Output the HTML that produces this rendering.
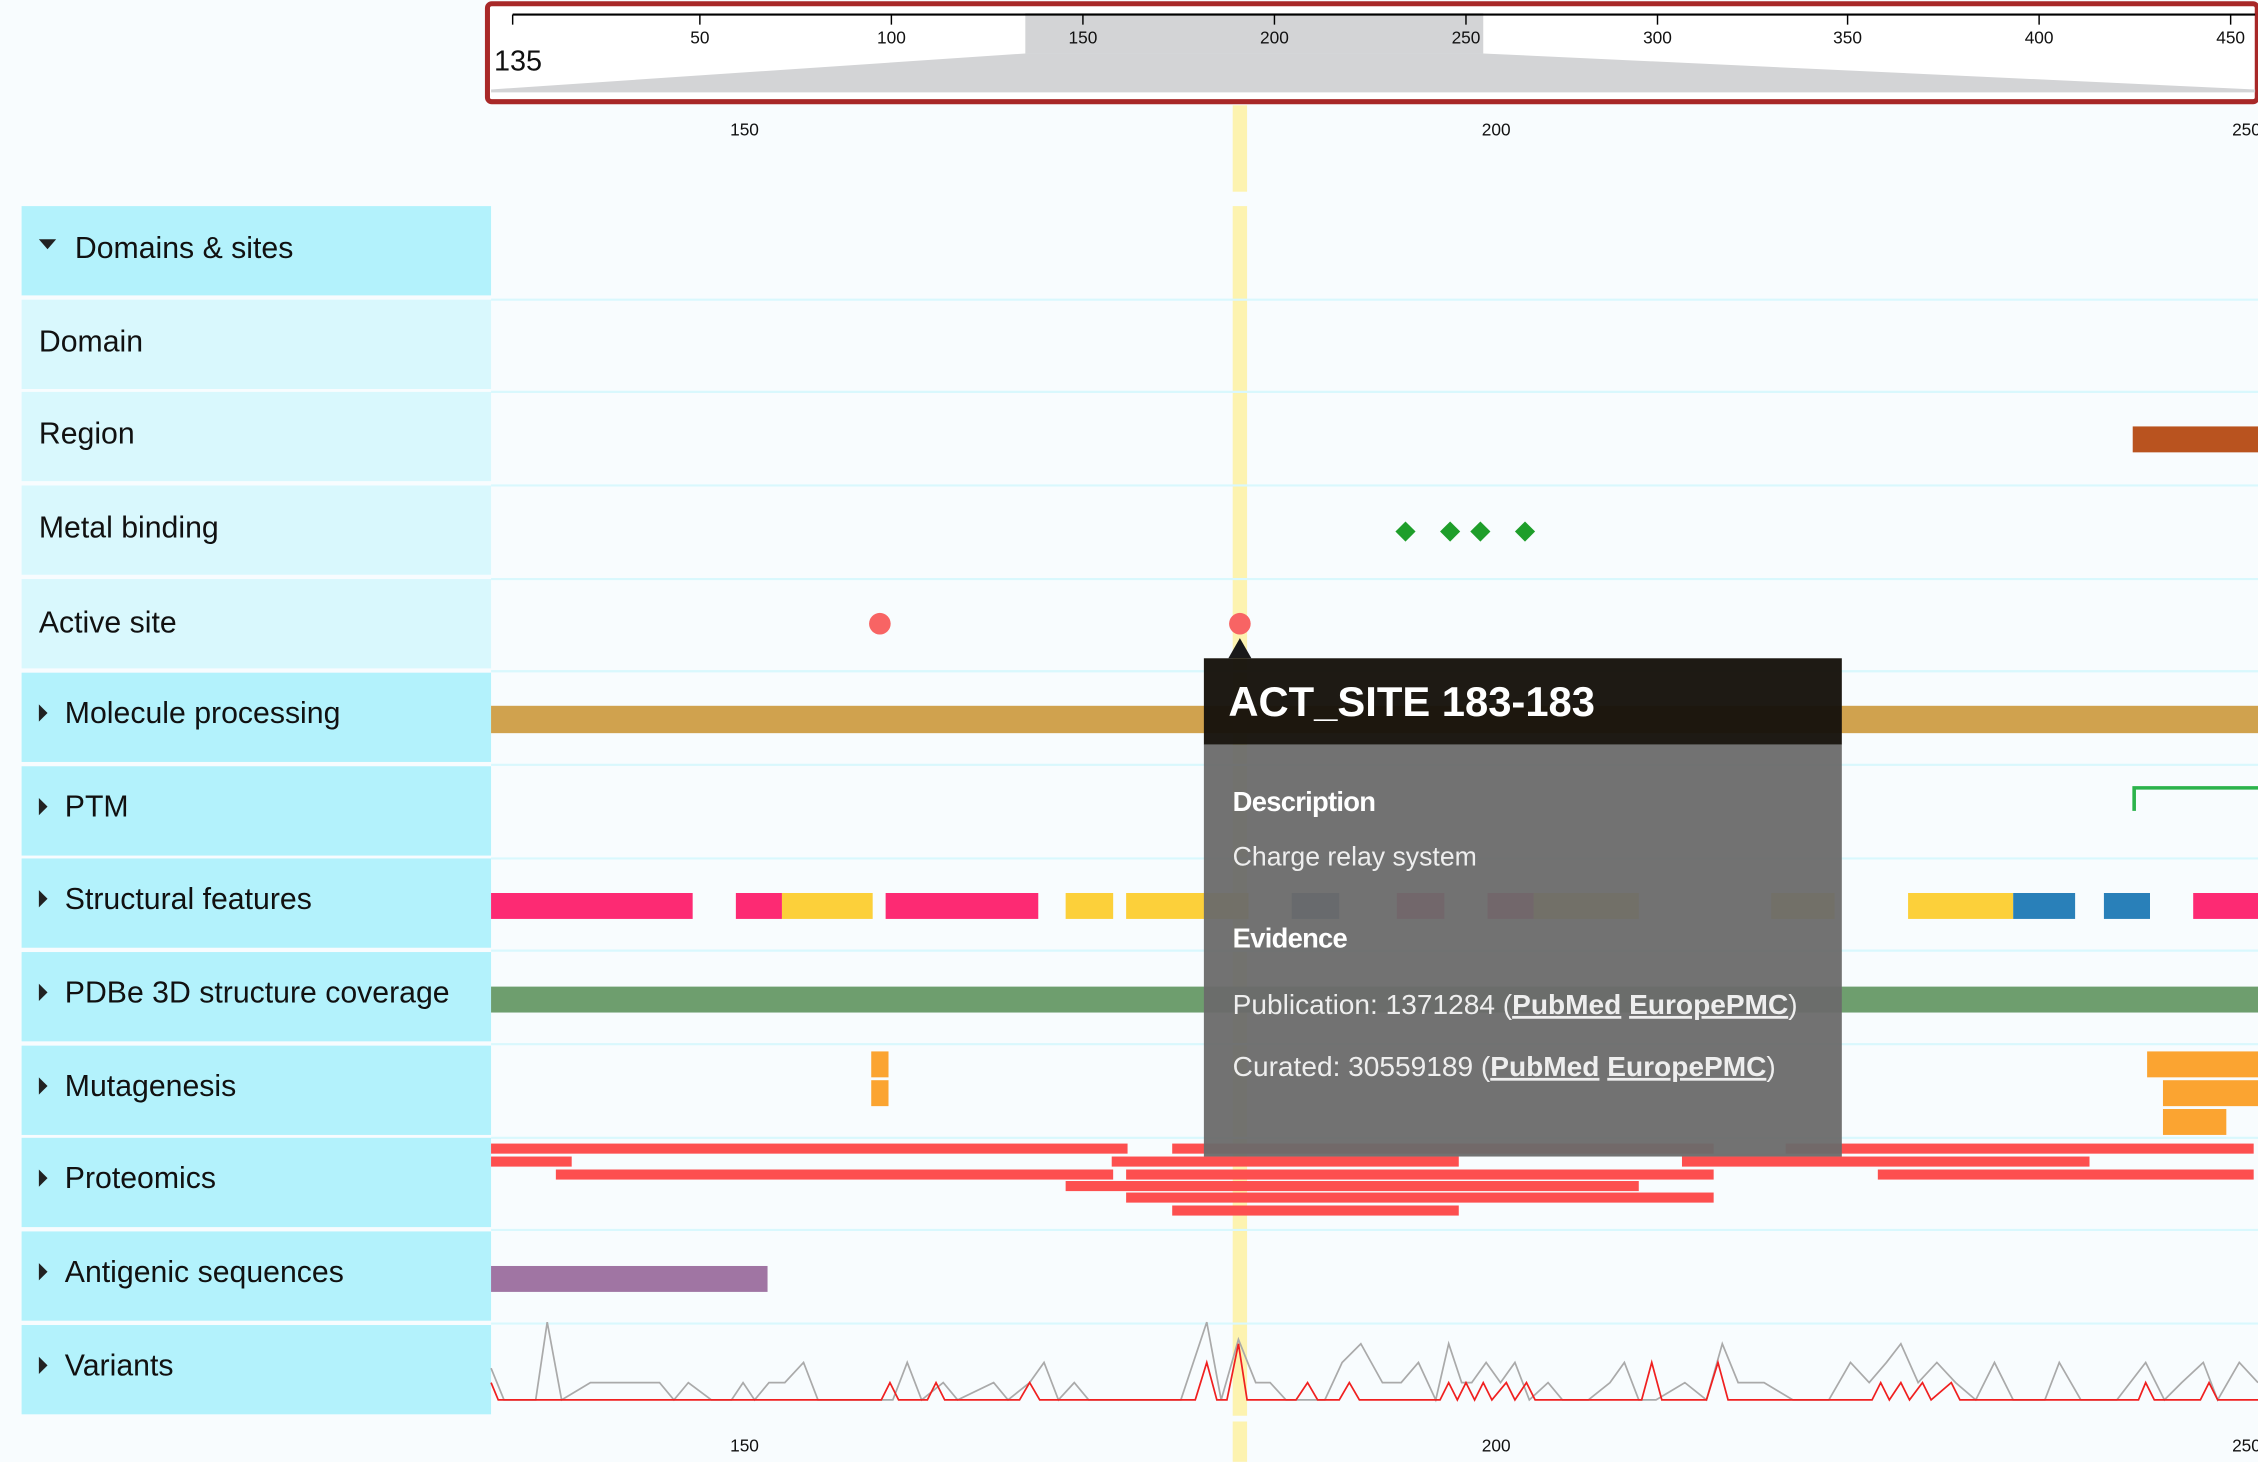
<!DOCTYPE html>
<html><head><meta charset="utf-8"><style>
html,body{margin:0;padding:0;background:#f8fcfe;overflow:hidden}
svg{display:block}
text{font-family:"Liberation Sans",sans-serif}
</style></head><body>
<svg width="2258" height="1462" viewBox="0 0 1568 1015" xmlns="http://www.w3.org/2000/svg">
<rect width="1568" height="1015" fill="#f8fcfe"/>
<rect x="338.5" y="2.5" width="1229" height="68" rx="3" fill="#fff" stroke="#a82828" stroke-width="3.5"/>
<polygon points="712,37 1030,37 1566,62 1566,64 341,64 341,62" fill="#d3d4d6"/>
<rect x="712" y="9" width="318" height="28" fill="#d3d4d6"/>
<line x1="356" y1="10" x2="1566" y2="10" stroke="#000" stroke-width="1.5"/>
<g stroke="#000" stroke-width="1">
<line x1="356" y1="10" x2="356" y2="17"/><line x1="486" y1="10" x2="486" y2="17"/><line x1="619" y1="10" x2="619" y2="17"/><line x1="752" y1="10" x2="752" y2="17"/><line x1="885" y1="10" x2="885" y2="17"/><line x1="1018" y1="10" x2="1018" y2="17"/><line x1="1151" y1="10" x2="1151" y2="17"/><line x1="1283" y1="10" x2="1283" y2="17"/><line x1="1416" y1="10" x2="1416" y2="17"/><line x1="1549" y1="10" x2="1549" y2="17"/>
</g>
<g font-size="12" fill="#111" text-anchor="middle">
<text x="486" y="30">50</text><text x="619" y="30">100</text><text x="752" y="30">150</text><text x="885" y="30">200</text><text x="1018" y="30">250</text><text x="1151" y="30">300</text><text x="1283" y="30">350</text><text x="1416" y="30">400</text><text x="1549" y="30">450</text>
</g>
<text x="343" y="49" font-size="20" fill="#111">135</text>
<g font-size="12" fill="#111" text-anchor="middle">
<text x="517" y="94">150</text><text x="1039" y="94">200</text><text x="1560" y="94">250</text>
<text x="517" y="1008">150</text><text x="1039" y="1008">200</text><text x="1560" y="1008">250</text>
</g>
<rect x="856" y="73" width="10" height="60" fill="#fdf3b0"/>
<rect x="856" y="143" width="10" height="840" fill="#fdf3b0"/>
<rect x="856" y="987" width="10" height="28" fill="#fdf3b0"/>
<g>
<rect x="15" y="143" width="326" height="62" fill="#b3f2fc"/>
<rect x="15" y="208" width="326" height="62" fill="#d9f8fd"/>
<rect x="15" y="272" width="326" height="62" fill="#d9f8fd"/>
<rect x="15" y="337" width="326" height="62" fill="#d9f8fd"/>
<rect x="15" y="402" width="326" height="62" fill="#d9f8fd"/>
<rect x="15" y="467" width="326" height="62" fill="#b3f2fc"/>
<rect x="15" y="532" width="326" height="62" fill="#b3f2fc"/>
<rect x="15" y="596" width="326" height="62" fill="#b3f2fc"/>
<rect x="15" y="661" width="326" height="62" fill="#b3f2fc"/>
<rect x="15" y="726" width="326" height="62" fill="#b3f2fc"/>
<rect x="15" y="790" width="326" height="62" fill="#b3f2fc"/>
<rect x="15" y="855" width="326" height="62" fill="#b3f2fc"/>
<rect x="15" y="920" width="326" height="62" fill="#b3f2fc"/>
</g>
<g stroke="#d9f8fd" stroke-width="1.5">
<line x1="341" y1="208" x2="1568" y2="208"/><line x1="341" y1="272" x2="1568" y2="272"/><line x1="341" y1="337" x2="1568" y2="337"/><line x1="341" y1="402" x2="1568" y2="402"/><line x1="341" y1="466" x2="1568" y2="466"/><line x1="341" y1="531" x2="1568" y2="531"/><line x1="341" y1="596" x2="1568" y2="596"/><line x1="341" y1="660" x2="1568" y2="660"/><line x1="341" y1="725" x2="1568" y2="725"/><line x1="341" y1="790" x2="1568" y2="790"/><line x1="341" y1="854" x2="1568" y2="854"/><line x1="341" y1="919" x2="1568" y2="919"/>
</g>
<g font-size="21" fill="#111">
<polygon points="27,166 39,166 33,173" fill="#222"/>
<text x="52" y="179">Domains &amp; sites</text>
<text x="27" y="244">Domain</text>
<text x="27" y="308">Region</text>
<text x="27" y="373">Metal binding</text>
<text x="27" y="439">Active site</text>
<g fill="#222"><polygon points="27,489 27,501 33,495"/><polygon points="27,554 27,566 33,560"/><polygon points="27,618 27,630 33,624"/><polygon points="27,683 27,695 33,689"/><polygon points="27,748 27,760 33,754"/><polygon points="27,812 27,824 33,818"/><polygon points="27,877 27,889 33,883"/><polygon points="27,942 27,954 33,948"/></g>
<text x="45" y="502">Molecule processing</text>
<text x="45" y="567">PTM</text>
<text x="45" y="631">Structural features</text>
<text x="45" y="696">PDBe 3D structure coverage</text>
<text x="45" y="761">Mutagenesis</text>
<text x="45" y="825">Proteomics</text>
<text x="45" y="890">Antigenic sequences</text>
<text x="45" y="955">Variants</text>
</g>
<rect x="1481" y="296" width="87" height="18" fill="#b9531f"/>
<g fill="#1e9e2a">
<polygon points="976,362 983,369 976,376 969,369"/><polygon points="1007,362 1014,369 1007,376 1000,369"/><polygon points="1028,362 1035,369 1028,376 1021,369"/><polygon points="1059,362 1066,369 1059,376 1052,369"/>
</g>
<circle cx="611" cy="433" r="7.5" fill="#f86464"/>
<circle cx="861" cy="433" r="7.5" fill="#f86464"/>
<rect x="341" y="490" width="1227" height="19" fill="#d0a24e"/>
<path d="M1482,563 V547 H1568" fill="none" stroke="#2bb34b" stroke-width="2.5"/>
<g>
<rect x="341" y="620" width="140" height="18" fill="#fd2a73"/>
<rect x="511" y="620" width="32" height="18" fill="#fd2a73"/>
<rect x="543" y="620" width="63" height="18" fill="#fcd03a"/>
<rect x="615" y="620" width="106" height="18" fill="#fd2a73"/>
<rect x="740" y="620" width="33" height="18" fill="#fcd03a"/>
<rect x="782" y="620" width="85" height="18" fill="#fcd03a"/>
<rect x="897" y="620" width="33" height="18" fill="#3c6d9c"/>
<rect x="970" y="620" width="33" height="18" fill="#fd2a73"/>
<rect x="1033" y="620" width="32" height="18" fill="#fd2a73"/>
<rect x="1065" y="620" width="73" height="18" fill="#fcd03a"/>
<rect x="1230" y="620" width="44" height="18" fill="#fcd03a"/>
<rect x="1325" y="620" width="73" height="18" fill="#fcd03a"/>
<rect x="1398" y="620" width="43" height="18" fill="#2980b9"/>
<rect x="1461" y="620" width="32" height="18" fill="#2980b9"/>
<rect x="1523" y="620" width="45" height="18" fill="#fd2a73"/>
</g>
<rect x="341" y="685" width="1227" height="18" fill="#6e9e6e"/>
<g fill="#fba431">
<rect x="605" y="730" width="12" height="18"/><rect x="605" y="750" width="12" height="18"/>
<rect x="1491" y="730" width="77" height="18"/><rect x="1502" y="750" width="66" height="18"/><rect x="1502" y="770" width="44" height="18"/>
</g>
<g fill="#fd4f4f">
<rect x="341" y="794" width="442" height="7"/><rect x="814" y="794" width="376" height="7"/><rect x="1240" y="794" width="325" height="7"/>
<rect x="341" y="803" width="56" height="7"/><rect x="772" y="803" width="241" height="7"/><rect x="1168" y="803" width="283" height="7"/>
<rect x="386" y="812" width="387" height="7"/><rect x="782" y="812" width="408" height="7"/><rect x="1304" y="812" width="261" height="7"/>
<rect x="740" y="820" width="398" height="7"/>
<rect x="782" y="828" width="408" height="7"/>
<rect x="814" y="837" width="199" height="7"/>
</g>
<rect x="341" y="879" width="192" height="18" fill="#a075a3"/>
<polyline fill="none" stroke="#aaa" stroke-width="1.2" points="341,950 350,972 372,972 380,918 390,972 410,960 458,960 468,972 478,960 494,972 508,972 516,960 524,972 534,960 545,960 558,946 568,972 620,972 630,946 640,972 655,960 665,972 690,960 700,972 715,960 725,946 735,972 746,960 756,972 805,972 820,972 838,918 848,972 860,930 872,960 882,960 893,972 903,972 920,972 932,946 945,933 960,960 973,960 985,946 997,972 1006,933 1015,960 1022,960 1032,946 1042,960 1052,946 1062,972 1075,960 1085,972 1103,972 1118,960 1128,946 1138,972 1150,972 1170,960 1185,972 1196,933 1207,960 1225,960 1245,972 1255,972 1270,972 1285,946 1298,960 1310,946 1320,933 1332,960 1345,946 1358,960 1372,972 1385,946 1398,972 1420,972 1430,946 1445,972 1470,972 1490,946 1503,972 1515,960 1530,946 1540,972 1555,946 1568,960"/>
<polyline fill="none" stroke="#f02020" stroke-width="1.2" points="341,960 346,972 612,972 618,960 624,972 644,972 650,960 656,972 708,972 715,960 722,972 830,972 838,946 845,972 852,972 860,933 866,972 900,972 908,960 915,972 930,972 937,960 944,972 1000,972 1006,960 1012,972 1018,960 1024,972 1030,960 1036,972 1046,960 1052,972 1060,960 1066,972 1140,972 1147,946 1154,972 1185,972 1193,946 1200,972 1300,972 1306,960 1312,972 1320,960 1326,972 1335,960 1341,972 1355,960 1361,972 1485,972 1490,960 1496,972 1528,972 1534,960 1540,972 1568,972"/>
<polygon points="853,457 861,443 869,457" fill="#1a1a1a"/>
<rect x="836" y="457" width="443" height="60" fill="#17130c" fill-opacity="0.97"/>
<rect x="836" y="517" width="443" height="286" fill="#6a6a6a" fill-opacity="0.95"/>
<text x="853" y="497" font-size="29" font-weight="bold" fill="#fff">ACT_SITE 183-183</text>
<g fill="#fff">
<text x="856" y="563" font-size="19" font-weight="bold" letter-spacing="-0.5">Description</text>
<text x="856" y="601" font-size="18.5" fill="#eee">Charge relay system</text>
<text x="856" y="658" font-size="19" font-weight="bold" letter-spacing="-0.5">Evidence</text>
<text x="856" y="704" font-size="19.5" fill="#eee">Publication: 1371284 (<tspan font-weight="bold" text-decoration="underline">PubMed</tspan> <tspan font-weight="bold" text-decoration="underline">EuropePMC</tspan>)</text>
<text x="856" y="747" font-size="19.5" fill="#eee">Curated: 30559189 (<tspan font-weight="bold" text-decoration="underline">PubMed</tspan> <tspan font-weight="bold" text-decoration="underline">EuropePMC</tspan>)</text>
</g>
</svg>
</body></html>
